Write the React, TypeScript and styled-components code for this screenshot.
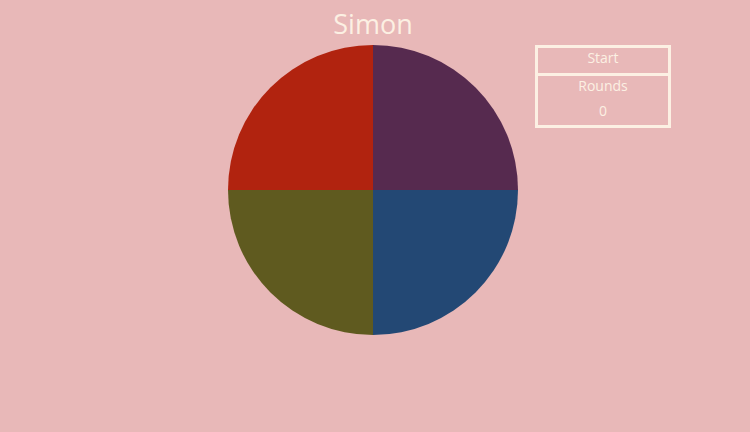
import styled, { createGlobalStyle } from "styled-components";

const GlobalStyle = createGlobalStyle`
    html, body {
        margin: 0;
        padding: 0;
        background: #e8b8b8;
        font-family: "Open Sans", "Liberation Sans", sans-serif;
    }
`

const cream = "#fcf0e3";

const pads = [
    { id: "red", color: "#b1230f" },
    { id: "purple", color: "#562a4f" },
    { id: "olive", color: "#5f5a1f" },
    { id: "blue", color: "#234874" },
];

export default function App() {
    return (
        <Page>
            <GlobalStyle />
            <Title>Simon</Title>
            <Game>
                <span />
                <Board>
                    {pads.map((pad) => <Pad key={pad.id} $color={pad.color} />)}
                </Board>
                <Controls>
                    <StartButton>Start</StartButton>
                    <Rounds>
                        <p>Rounds</p>
                        <p>0</p>
                    </Rounds>
                </Controls>
            </Game>
        </Page>
    )
}

const Page = styled.div`
    width: 750px;
    height: 432px;
    background: #e8b8b8;
    padding-top: 5px;
    box-sizing: border-box;
`

const Title = styled.h1`
    margin: 0 4px 3px 0;
    text-align: center;
    font-size: 27px;
    font-weight: 400;
    line-height: 37px;
    color: ${cream};
`

const Game = styled.div`
    display: grid;
    grid-template-columns: 1fr 290px 1fr;
    align-items: start;
    padding-right: 4px;
`

const Board = styled.div`
    width: 290px;
    height: 290px;
    border-radius: 50%;
    overflow: hidden;
    display: grid;
    grid-template-columns: 1fr 1fr;
    grid-template-rows: 1fr 1fr;
`

const Pad = styled.div<{ $color: string }>`
    background: ${({ $color }) => $color};
`

const Controls = styled.div`
    margin-left: 17px;
    width: 136px;
    box-sizing: border-box;
    border: 3px solid ${cream};
    color: ${cream};
    font-size: 14px;
    text-align: center;
`

const StartButton = styled.div`
    padding: 0 0 6px;
    line-height: 19px;
    border-bottom: 3px solid ${cream};
    cursor: pointer;
`

const Rounds = styled.div`
    display: flex;
    flex-direction: column;
    gap: 6px;
    padding-bottom: 5px;

    p {
        margin: 0;
        line-height: 19px;
    }
`
